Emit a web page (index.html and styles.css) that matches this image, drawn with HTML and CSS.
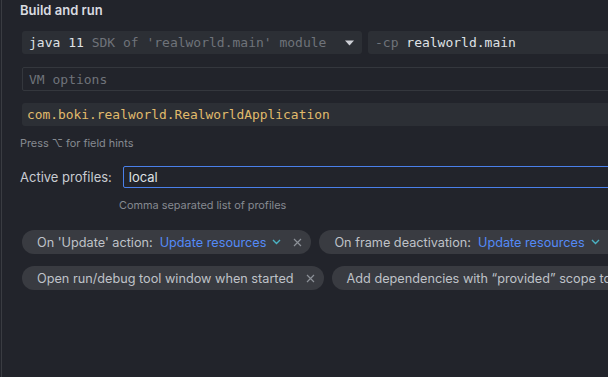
FILE: index.html
```
<!DOCTYPE html>
<html lang="en">
<head>
    <meta charset="UTF-8">
    <meta name="viewport" content="width=device-width, initial-scale=1.0">
    <title>Build and run</title>
    <link rel="stylesheet" href="styles.css">
</head>
<body>
    <div class="panel">
        <div class="section-head">
            <span class="section-title">Build and run</span>
            <a class="modify-link">Modify options</a>
        </div>

        <div class="field-row">
            <div class="combo">
                <span class="mono"><span class="strong">java 11</span> <span class="dim">SDK of 'realworld.main' module</span></span>
                <svg class="combo-arrow" width="9" height="6" viewBox="0 0 9 6"><path d="M0 0.5h9L4.5 5.5z" fill="#ced0d6"/></svg>
            </div>
            <div class="field filled">
                <span class="mono"><span class="dim">-cp</span> <span class="strong">realworld.main</span></span>
            </div>
        </div>

        <div class="field-row">
            <div class="field outlined">
                <span class="mono dim">VM options</span>
            </div>
        </div>

        <div class="field-row">
            <div class="field filled class-field">
                <span class="mono class-name">com.boki.realworld.RealworldApplication</span>
            </div>
        </div>

        <p class="hint">Press ⌥ for field hints</p>

        <div class="profile-row">
            <label class="profile-label">Active profiles:</label>
            <div class="profile-input">local</div>
        </div>
        <p class="hint profile-hint">Comma separated list of profiles</p>

        <div class="chips">
            <div class="chip">
                <span>On 'Update' action:</span>
                <span class="chip-link">Update resources</span>
                <svg class="chevron" width="9" height="6" viewBox="0 0 9 6"><path d="M1 1l3.5 3.5L8 1" fill="none" stroke="#4bb3c4" stroke-width="1.4"/></svg>
                <svg class="close" width="9" height="9" viewBox="0 0 9 9"><path d="M1 1l7 7M8 1l-7 7" stroke="#8c9097" stroke-width="1.2"/></svg>
            </div>
            <div class="chip">
                <span>On frame deactivation:</span>
                <span class="chip-link">Update resources</span>
                <svg class="chevron" width="9" height="6" viewBox="0 0 9 6"><path d="M1 1l3.5 3.5L8 1" fill="none" stroke="#4bb3c4" stroke-width="1.4"/></svg>
                <svg class="close" width="9" height="9" viewBox="0 0 9 9"><path d="M1 1l7 7M8 1l-7 7" stroke="#8c9097" stroke-width="1.2"/></svg>
            </div>
        </div>
        <div class="chips">
            <div class="chip">
                <span>Open run/debug tool window when started</span>
                <svg class="close" width="9" height="9" viewBox="0 0 9 9"><path d="M1 1l7 7M8 1l-7 7" stroke="#8c9097" stroke-width="1.2"/></svg>
            </div>
            <div class="chip">
                <span>Add dependencies with “provided” scope to classpath</span>
                <svg class="close" width="9" height="9" viewBox="0 0 9 9"><path d="M1 1l7 7M8 1l-7 7" stroke="#8c9097" stroke-width="1.2"/></svg>
            </div>
        </div>
    </div>
</body>
</html>
```
FILE: styles.css
```
/* Page */
body {
    margin: 0;
    background: #22242b;
    color: #c9ccd2;
    font-family: Inter, "Noto Sans", sans-serif;
    font-size: 13px;
    overflow: hidden;
    height: 377px;
}

.panel {
    margin-left: 1px;
    border-left: 1px solid #3a3c42;
    height: 377px;
    width: 760px;
    padding-left: 18px;
}

/* Section header */
.section-head {
    display: flex;
    justify-content: space-between;
    align-items: center;
    height: 20px;
    width: 680px;
}

.section-title {
    font-weight: 600;
    color: #d9dbe0;
}

.modify-link {
    color: #548af7;
}

/* Fields */
.field-row {
    display: flex;
    gap: 6px;
    margin-left: 2px;
    margin-top: 11px;
}

.field-row + .field-row {
    margin-top: 13px;
}

.field-row:nth-of-type(4) {
    margin-top: 12px;
}

.combo, .field {
    display: flex;
    align-items: center;
    height: 23px;
    box-sizing: border-box;
    border-radius: 3px;
    padding: 0 7px;
}

.combo {
    width: 340px;
    background: #2c2f35;
    justify-content: space-between;
    padding-right: 8px;
}

.field {
    flex: 1;
}

.filled {
    background: #2c2f35;
}

.class-field {
    padding-left: 5px;
}

.outlined {
    height: 24px;
    border: 1px solid #34373d;
    border-radius: 2px;
    padding-left: 6px;
}

.mono {
    font-family: "DejaVu Sans Mono", "Liberation Mono", monospace;
    font-size: 13px;
    white-space: nowrap;
}

.strong {
    color: #dfe1e5;
}

.dim {
    color: #6f737a;
}

.class-name {
    color: #e0bb6c;
    font-size: 12.9px;
}

/* Hints */
.hint {
    margin: 10px 0 0;
    font-size: 10.9px;
    color: #868a91;
    line-height: 14px;
}

/* Active profiles */
.profile-row {
    display: flex;
    align-items: center;
    gap: 11px;
    margin-top: 16px;
}

.profile-label {
    color: #c9ccd2;
}

.profile-input {
    flex: 1;
    height: 22px;
    box-sizing: border-box;
    border: 1px solid #4a80ea;
    border-radius: 2px;
    padding: 0 5px;
    line-height: 20px;
    color: #dfe1e5;
}

.profile-hint {
    margin: 10px 0 0 99px;
}

/* Option chips */
.chips {
    display: flex;
    gap: 8px;
    margin-left: 2px;
    margin-top: 12px;
}

.profile-hint + .chips {
    margin-top: 18px;
}

.chip {
    display: flex;
    align-items: center;
    flex-shrink: 0;
    height: 24px;
    padding: 0 9px 0 15px;
    border-radius: 12px;
    background: #393b41;
    color: #bfc2c8;
    font-size: 12.7px;
    white-space: nowrap;
}

.chip-link {
    color: #548af7;
    margin-left: 7px;
}

.chevron {
    margin-left: 6px;
}

.close {
    margin-left: 12px;
}
```
